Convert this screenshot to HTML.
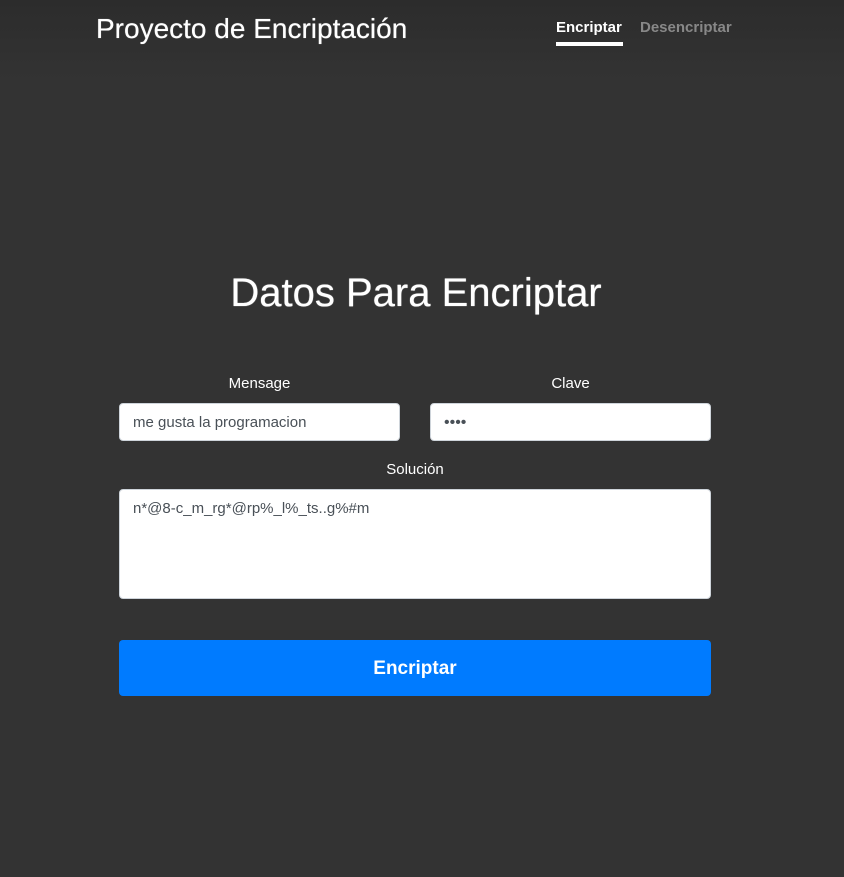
<!DOCTYPE html>
<html><head><meta charset="utf-8"><style>
*{box-sizing:border-box;margin:0;padding:0}
body{width:844px;height:877px;background:#333;font-family:"Liberation Sans",sans-serif;color:#fff;position:relative;overflow:hidden}
.hdr{position:absolute;left:0;top:0;width:844px;height:80px;background:linear-gradient(#2c2c2c,#333)}
.t{position:absolute;left:96px;top:13px;font-size:28px;color:#fff;text-shadow:0 0 0.6px #fff}
.n1{position:absolute;left:556px;top:19px;font-size:15px;font-weight:bold;color:#fff}
.u{position:absolute;left:556px;top:42px;width:67px;height:4px;background:#fff}
.n2{position:absolute;left:640px;top:19px;font-size:15px;font-weight:bold;color:#888}
h1{position:absolute;left:0;width:832px;text-align:center;top:271px;font-size:40px;font-weight:normal;text-shadow:0 0 0.8px #fff}
.l{position:absolute;font-size:15px;text-align:center}
.in{position:absolute;background:#fff;border:1px solid #ced4da;border-radius:4px;color:#495057;font-size:15px;padding-left:13px}
.btn{position:absolute;left:119px;top:640px;width:592px;height:56px;background:#007bff;border-radius:4px;color:#fff;font-weight:bold;font-size:19px;text-align:center;line-height:58px}
</style></head><body>
<div class="hdr"></div>
<div class="t">Proyecto de Encriptación</div>
<div class="n1">Encriptar</div><div class="u"></div>
<div class="n2">Desencriptar</div>
<h1>Datos Para Encriptar</h1>
<div class="l" style="left:119px;width:281px;top:375px">Mensage</div>
<div class="l" style="left:430px;width:281px;top:375px">Clave</div>
<div class="in" style="left:119px;top:403px;width:281px;height:38px;line-height:38px">me gusta la programacion</div>
<div class="in" style="left:430px;top:403px;width:281px;height:38px;line-height:38px;font-size:16px;letter-spacing:0px">••••</div>
<div class="l" style="left:119px;width:592px;top:461px">Solución</div>
<div class="in" style="left:119px;top:489px;width:592px;height:110px;padding-top:10px">n*@8-c_m_rg*@rp%_l%_ts..g%#m</div>
<div class="btn">Encriptar</div>
</body></html>
